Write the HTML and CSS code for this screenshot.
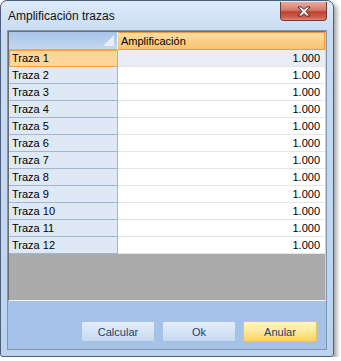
FILE: index.html
```html
<!DOCTYPE html>
<html lang="es">
<head>
    <meta charset="UTF-8">
    <title>Amplificación trazas</title>
    <link rel="stylesheet" href="styles.css">
</head>
<body>
    <div class="window">
        <div class="titlebar">
            <span class="title">Amplificación trazas</span>
            <div class="close">
                <svg width="16" height="11" viewBox="0 0 16 11">
                    <path d="M2 1 L5.5 1 L8 3.6 L10.5 1 L14 1 L10 5.5 L14 10 L10.5 10 L8 7.4 L5.5 10 L2 10 L6 5.5 Z" fill="#ffffff" stroke="#4a2424" stroke-width="1" stroke-linejoin="round"/>
                </svg>
            </div>
        </div>
        <div class="client">
            <div class="grid">
                <div class="row header">
                    <div class="rowhead corner"><span class="sort"></span></div>
                    <div class="cell colhead">Amplificación</div>
                </div>
                <div class="row selected"><div class="rowhead">Traza 1</div><div class="cell">1.000</div></div>
                <div class="row"><div class="rowhead">Traza 2</div><div class="cell">1.000</div></div>
                <div class="row"><div class="rowhead">Traza 3</div><div class="cell">1.000</div></div>
                <div class="row"><div class="rowhead">Traza 4</div><div class="cell">1.000</div></div>
                <div class="row"><div class="rowhead">Traza 5</div><div class="cell">1.000</div></div>
                <div class="row"><div class="rowhead">Traza 6</div><div class="cell">1.000</div></div>
                <div class="row"><div class="rowhead">Traza 7</div><div class="cell">1.000</div></div>
                <div class="row"><div class="rowhead">Traza 8</div><div class="cell">1.000</div></div>
                <div class="row"><div class="rowhead">Traza 9</div><div class="cell">1.000</div></div>
                <div class="row"><div class="rowhead">Traza 10</div><div class="cell">1.000</div></div>
                <div class="row"><div class="rowhead">Traza 11</div><div class="cell">1.000</div></div>
                <div class="row"><div class="rowhead">Traza 12</div><div class="cell">1.000</div></div>
                <div class="empty"></div>
            </div>
            <div class="buttons">
                <button class="btn">Calcular</button>
                <button class="btn">Ok</button>
                <button class="btn default">Anular</button>
            </div>
        </div>
    </div>
</body>
</html>
```

FILE: styles.css
```css
body {
    margin: 0;
    background-color: #ffffff;
    font-family: 'Liberation Sans', Arial, sans-serif;
    font-size: 11px;
    color: #000000;
}
.window {
    width: 334px;
    height: 357px;
    box-sizing: border-box;
    border: 1px solid #4b5d77;
    border-radius: 7px 7px 3px 3px;
    background: linear-gradient(#deebf9, #c9dcf3 30px, #bcd3ef);
    box-shadow: 3px 3px 4px rgba(0, 0, 0, 0.35);
    padding: 0 6px 6px;
    display: flex;
    flex-direction: column;
}
.titlebar {
    height: 29px;
    display: flex;
    justify-content: space-between;
    align-items: flex-start;
}
.title {
    font-size: 12px;
    padding: 8px 0 0 1px;
    color: #111111;
}
.close {
    width: 45px;
    height: 18px;
    margin-top: 1px;
    border: 1px solid #6d3a36;
    border-top: none;
    border-radius: 0 0 4px 4px;
    background: linear-gradient(#e9a99c, #d47b6c 45%, #c1402f 55%, #cf5f4c 85%, #e08a78);
    display: flex;
    justify-content: center;
    align-items: center;
}
.client {
    flex: 1;
    border: 1px solid #7f95b2;
    background-color: #a5c3e8;
    display: flex;
    flex-direction: column;
}
.grid {
    height: 270px;
    box-sizing: border-box;
    border: 1px solid #6d6d6d;
    border-bottom-color: #f4f4f4;
    border-right-color: #d0d0d0;
    background-color: #ababab;
    display: flex;
    flex-direction: column;
}
.row {
    display: grid;
    grid-template-columns: 109px 1fr;
    height: 17px;
}
.row.header {
    height: 18px;
}
.rowhead {
    box-sizing: border-box;
    background-color: #dfe9f5;
    border-right: 1px solid #9fb7d2;
    border-bottom: 1px solid #9fb7d2;
    padding-left: 3px;
    line-height: 16px;
}
.cell {
    box-sizing: border-box;
    background-color: #ffffff;
    border-bottom: 1px solid #e6e6e6;
    text-align: right;
    padding-right: 5px;
    line-height: 16px;
}
.selected .rowhead {
    background-color: #ffd69a;
    border: 1px solid #f2a141;
    padding-left: 2px;
    line-height: 15px;
}
.selected .cell {
    background-color: #e9edf6;
}
.corner {
    background: linear-gradient(#a7c4e9, #c4d8f1);
    border-right: 1px solid #eef4fb;
    border-bottom: 1px solid #9fb7d2;
    display: flex;
    justify-content: flex-end;
    align-items: flex-end;
    padding: 0 3px 3px 0;
}
.sort {
    width: 0;
    height: 0;
    border-left: 11px solid transparent;
    border-bottom: 11px solid #e9eef5;
}
.colhead {
    background: linear-gradient(#fbdea4, #f9d089 50%, #f7c46c);
    border: 1px solid #f29a38;
    border-left: none;
    text-align: left;
    padding-left: 3px;
    line-height: 16px;
}
.empty {
    flex: 1;
}
.buttons {
    display: flex;
    justify-content: flex-end;
    gap: 7px;
    padding: 20px 9px 0 0;
}
.btn {
    width: 74px;
    height: 21px;
    border: 1px solid #a9c1de;
    border-radius: 2px;
    background: linear-gradient(#e3edf9, #d6e4f6 50%, #c6d9f1);
    font-family: 'Liberation Sans', Arial, sans-serif;
    font-size: 11px;
    color: #1e3e6e;
    padding: 0;
}
.btn.default {
    border-color: #e3c46e;
    background: linear-gradient(#fff6d0, #ffe89a 50%, #fdd25a);
}
```
